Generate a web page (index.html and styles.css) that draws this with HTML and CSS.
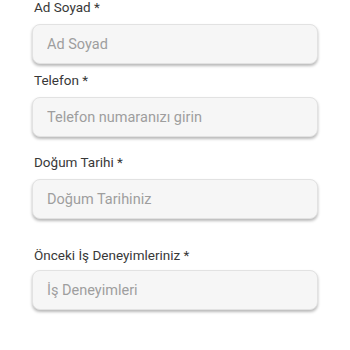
FILE: index.html
```html
<!DOCTYPE html>
<html lang="tr">
<head>
  <meta charset="UTF-8">
  <meta name="viewport" content="width=device-width, initial-scale=1">
  <title>Başvuru Formu</title>
  <link rel="stylesheet" href="styles.css">
</head>
<body>

  <!-- başvuru formu -->
  <form class="apply-form">
    <div class="field">
      <label class="field-label" for="adSoyad">Ad Soyad *</label>
      <input class="field-input" id="adSoyad" type="text" placeholder="Ad Soyad">
    </div>

    <div class="field">
      <label class="field-label" for="telefon">Telefon *</label>
      <input class="field-input" id="telefon" type="tel" placeholder="Telefon numaranızı girin">
    </div>

    <div class="field field-date">
      <label class="field-label" for="dogum">Doğum Tarihi *</label>
      <input class="field-input" id="dogum" type="text" placeholder="Doğum Tarihiniz">
    </div>

    <div class="field field-exp">
      <label class="field-label" for="deneyim">Önceki İş Deneyimleriniz *</label>
      <input class="field-input" id="deneyim" type="text" placeholder="İş Deneyimleri">
    </div>
  </form>

</body>
</html>
```

FILE: styles.css
```css
/* reset */
*, *::before, *::after { margin:0; padding:0; box-sizing:border-box; }
html, body { width:100%; min-height:100vh; background:#fff; }

body {
  font-family:Roboto, 'Noto Sans', sans-serif;
  color:#333;
  padding:0 32px;
  overflow:hidden;
}

/* form */
.apply-form {
  display:flex; flex-direction:column;
  margin-top:-2px;
}

.field { display:flex; flex-direction:column; margin-bottom:7px; }
.field-date { margin-top:9px; }
.field-exp  { margin-top:20px; }

.field-label {
  font-size:13.5px; line-height:18px;
  color:#383838; padding-left:2px;
  margin-bottom:8px;
}
.field-exp .field-label { margin-bottom:6px; }

.field-input {
  width:100%; height:40px;
  padding:0 14px;
  font-family:Roboto, 'Noto Sans', sans-serif;
  font-size:14.5px; color:#333;
  background:#f6f6f6;
  border:1px solid #e2e2e2; border-radius:8px;
  box-shadow:0 2px 3px rgba(0,0,0,0.28);
  outline:none;
}
.field-input::placeholder { color:#9e9e9e; }
```
